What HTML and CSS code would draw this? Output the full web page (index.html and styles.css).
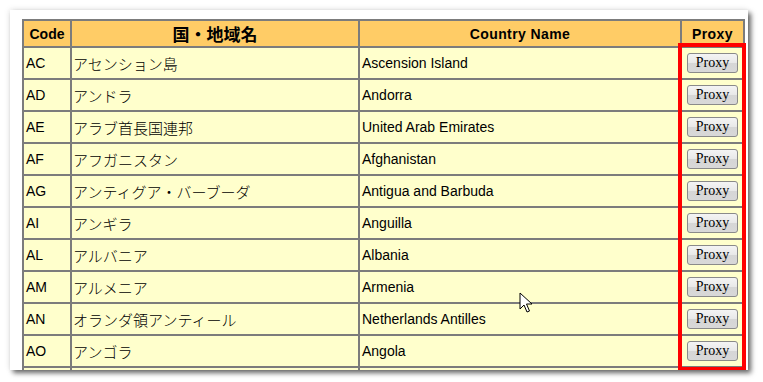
FILE: index.html
```html
<!DOCTYPE html>
<html lang="ja">
<head>
<meta charset="utf-8">
<title>Country codes</title>
<link rel="stylesheet" href="styles.css">
</head>
<body>
<div class="card">
  <table class="codes">
    <colgroup>
      <col class="c-code"><col class="c-ja"><col class="c-en"><col class="c-proxy">
    </colgroup>
    <thead>
      <tr><th>Code</th><th class="ja-head">国・地域名</th><th>Country Name</th><th>Proxy</th></tr>
    </thead>
    <tbody>
      <tr><td>AC</td><td class="ja">アセンション島</td><td>Ascension Island</td><td class="btn-cell"><button class="proxy">Proxy</button></td></tr>
      <tr><td>AD</td><td class="ja">アンドラ</td><td>Andorra</td><td class="btn-cell"><button class="proxy">Proxy</button></td></tr>
      <tr><td>AE</td><td class="ja">アラブ首長国連邦</td><td>United Arab Emirates</td><td class="btn-cell"><button class="proxy">Proxy</button></td></tr>
      <tr><td>AF</td><td class="ja">アフガニスタン</td><td>Afghanistan</td><td class="btn-cell"><button class="proxy">Proxy</button></td></tr>
      <tr><td>AG</td><td class="ja">アンティグア・バーブーダ</td><td>Antigua and Barbuda</td><td class="btn-cell"><button class="proxy">Proxy</button></td></tr>
      <tr><td>AI</td><td class="ja">アンギラ</td><td>Anguilla</td><td class="btn-cell"><button class="proxy">Proxy</button></td></tr>
      <tr><td>AL</td><td class="ja">アルバニア</td><td>Albania</td><td class="btn-cell"><button class="proxy">Proxy</button></td></tr>
      <tr><td>AM</td><td class="ja">アルメニア</td><td>Armenia</td><td class="btn-cell"><button class="proxy">Proxy</button></td></tr>
      <tr><td>AN</td><td class="ja">オランダ領アンティール</td><td>Netherlands Antilles</td><td class="btn-cell"><button class="proxy">Proxy</button></td></tr>
      <tr><td>AO</td><td class="ja">アンゴラ</td><td>Angola</td><td class="btn-cell"><button class="proxy">Proxy</button></td></tr>
      <tr><td></td><td></td><td></td><td></td></tr>
    </tbody>
  </table>
  <div class="highlight"></div>
  <svg class="cursor" width="14" height="22" viewBox="0 0 14 22">
    <path d="M1 1 L1 17 L5 13 L8 20 L10.5 19 L7.5 12 L13 12 Z" fill="#fff" stroke="#000" stroke-width="1" stroke-linejoin="miter"/>
  </svg>
</div>
</body>
</html>
```
FILE: styles.css
```css
html, body {
  margin: 0;
  padding: 0;
  background: #ffffff;
}
body {
  width: 763px;
  height: 382px;
  overflow: hidden;
  font-family: "Liberation Sans", "Noto Sans CJK JP", sans-serif;
}
.card {
  position: relative;
  margin: 10px 0 0 10px;
  width: 738px;
  height: 360px;
  background: #ffffff;
  box-shadow: 3px 3px 5px rgba(0,0,0,0.6), -1px -1px 6px rgba(0,0,0,0.08);
  overflow: hidden;
  padding: 9px 0 0 12px;
  box-sizing: border-box;
}
.codes {
  border-collapse: collapse;
  table-layout: fixed;
  width: 721px;
  font-size: 14px;
  color: #000;
}
.c-code { width: 48px; }
.c-ja { width: 288px; }
.c-en { width: 322px; }
.c-proxy { width: 63px; }
.codes th, .codes td {
  border: 2px solid #7c7c7c;
  padding: 0 2px;
  white-space: nowrap;
  overflow: hidden;
}
.codes th {
  background: #ffcc66;
  height: 25px;
  font-weight: bold;
  font-size: 14px;
  letter-spacing: 0.4px;
  text-align: center;
}
.codes th:first-child { letter-spacing: 0; padding: 0 1px; }
.codes th.ja-head {
  font-family: "Noto Sans CJK JP", sans-serif;
  font-size: 17px;
  letter-spacing: 0;
}
.codes td {
  background: #ffffcc;
  height: 30px;
  text-align: left;
}
.codes td.ja {
  font-family: "Noto Sans CJK JP", sans-serif;
  font-weight: 300;
  font-size: 15px;
  padding-left: 1px;
}
.codes td.btn-cell { text-align: center; padding: 0; }
.proxy {
  width: 51px;
  height: 20px;
  padding: 0;
  font-family: "Liberation Serif", serif;
  font-weight: normal;
  font-size: 14px;
  color: #000;
  border: 1px solid #8a8a8a;
  border-radius: 3px;
  background: linear-gradient(#f4f4f4 0%, #e8e8e8 50%, #d6d6d6 51%, #d8d8d8 100%);
  vertical-align: middle;
}
.highlight {
  position: absolute;
  left: 668px;
  top: 33px;
  width: 68px;
  height: 328px;
  box-sizing: border-box;
  border: 4px solid #ff0000;
}
.cursor {
  position: absolute;
  left: 509px;
  top: 282px;
}
```
